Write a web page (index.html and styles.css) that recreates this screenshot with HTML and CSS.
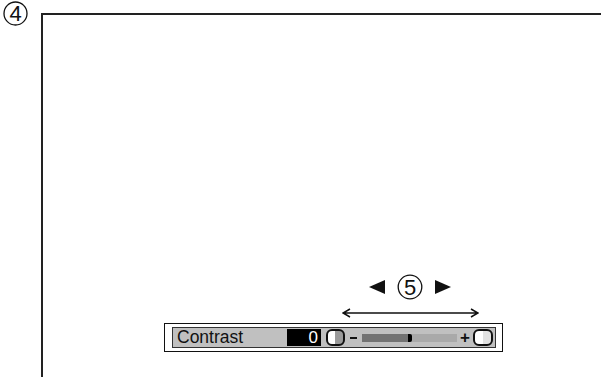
FILE: index.html
```html
<!doctype html>
<html>
<head>
<meta charset="utf-8">
<title>Contrast</title>
<link rel="stylesheet" href="styles.css">
</head>
<body>
  <div class="page">
    <div class="callout">
      <svg width="30" height="30" viewBox="0 0 30 30">
        <circle cx="13.5" cy="13.5" r="11.5" fill="none" stroke="#111" stroke-width="1.3"/>
        <text x="13.5" y="21.3" text-anchor="middle" class="num">4</text>
      </svg>
    </div>
    <div class="frame">
      <div class="hint">
        <div class="hint-row">
          <span class="tri tri-left"></span>
          <svg width="28" height="26" viewBox="0 0 28 26">
            <circle cx="14" cy="13" r="11.8" fill="none" stroke="#111" stroke-width="1.3"/>
            <text x="14" y="20.8" text-anchor="middle" class="num">5</text>
          </svg>
          <span class="tri tri-right"></span>
        </div>
        <svg class="range" width="137" height="10" viewBox="0 0 137 10">
          <path d="M1 5 H136 M8 1 L1 5 L8 9 M129 1 L136 5 L129 9" fill="none" stroke="#111" stroke-width="1.5"/>
        </svg>
      </div>
      <div class="osd">
        <div class="osd-bar">
          <span class="label">Contrast</span>
          <span class="value">0</span>
          <span class="knob knob-left"></span>
          <span class="minus"></span>
          <span class="track"><span class="fill"></span><span class="mark"></span></span>
          <span class="plus">+</span>
          <span class="knob knob-right"></span>
        </div>
      </div>
    </div>
  </div>
</body>
</html>
```

FILE: styles.css
```css
body{
  margin: 0;
  background: #fff;
  font-family: "Liberation Sans", Arial, sans-serif;
  color: #111;
}
.page{
  display: flex;
  height: 377px;
  overflow: hidden;
}
.callout{
  width: 41px;
}
.callout svg{
  display: block;
  margin-left: 2px;
  margin-top: 0;
}
.num{
  font-family: "Liberation Sans", Arial, sans-serif;
  font-size: 22px;
  fill: #111;
}
.frame{
  flex: 1;
  margin-top: 13px;
  border-top: 2px solid #222;
  border-left: 2px solid #222;
  display: flex;
  flex-direction: column;
  justify-content: flex-end;
  align-items: flex-start;
  padding-left: 121px;
  padding-bottom: 25px;
}
.hint{
  margin-left: 178px;
  width: 137px;
  display: flex;
  flex-direction: column;
  align-items: center;
}
.hint-row{
  display: flex;
  align-items: center;
  gap: 11px;
  margin-left: -2px;
}
.hint-row svg{
  display: block;
}
.tri{
  width: 0;
  height: 0;
  border-top: 7px solid transparent;
  border-bottom: 7px solid transparent;
}
.tri-left{
  border-right: 16px solid #111;
}
.tri-right{
  border-left: 16px solid #111;
}
.range{
  display: block;
  margin-top: 8px;
  margin-bottom: 5px;
}
.osd{
  width: 339px;
  height: 29px;
  box-sizing: border-box;
  border: 1.5px solid #111;
  background: #fff;
  padding: 3px 6px 3px 7px;
}
.osd-bar{
  height: 100%;
  box-sizing: border-box;
  border: 1px solid #333;
  background: #c0c0c0;
  display: flex;
  align-items: center;
  padding-left: 4px;
}
.label{
  width: 110px;
  font-size: 17.5px;
  line-height: 19px;
}
.value{
  width: 34px;
  height: 17px;
  box-sizing: border-box;
  background: #000;
  color: #fff;
  text-align: right;
  padding-right: 3px;
  font-size: 17px;
  line-height: 17px;
}
.knob{
  width: 19px;
  height: 17px;
  box-sizing: border-box;
  border: 2px solid #111;
  border-radius: 6px;
  margin-left: 5px;
}
.knob-left{
  background: linear-gradient(to right, #fff 50%, #9a9a9a 50%);
}
.knob-right{
  width: 20px;
  margin-left: 3px;
  background: linear-gradient(to right, #fff 50%, #e2e2e2 50%);
}
.minus{
  width: 7px;
  height: 2px;
  background: #111;
  margin-left: 5px;
}
.track{
  width: 95px;
  height: 8px;
  margin-left: 5px;
  background: #a9a9a9;
  display: flex;
}
.fill{
  width: 46px;
  background: #727272;
}
.mark{
  width: 4px;
  background: #000;
  border-radius: 0 2px 2px 0;
}
.plus{
  margin-left: 3px;
  font-size: 17px;
  font-weight: bold;
  line-height: 17px;
}
```
